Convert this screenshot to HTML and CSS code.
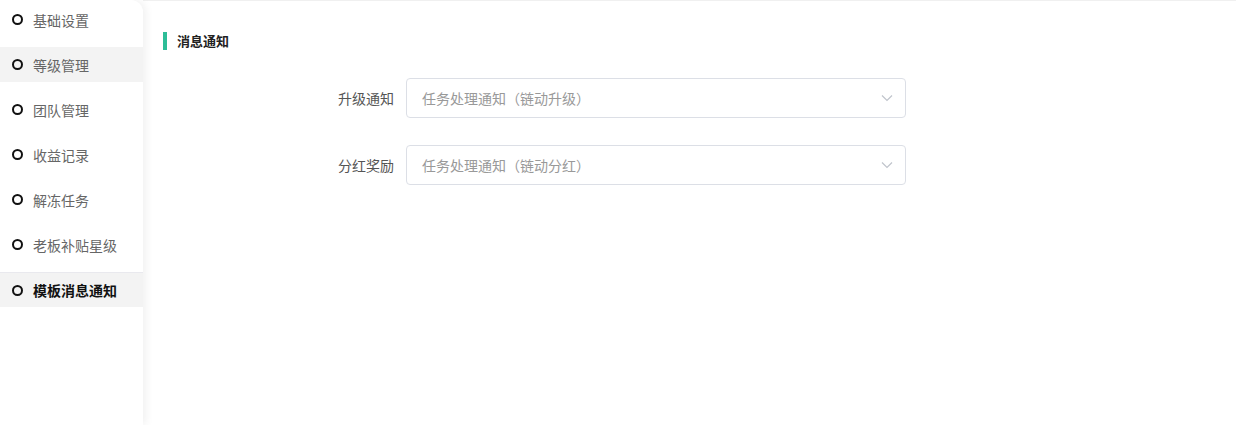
FILE: index.html
```html
<!DOCTYPE html>
<html lang="zh-CN">
  <head>
    <meta charset="utf-8" />
    <meta name="viewport" content="width=device-width, initial-scale=1" />
    <title>模板消息通知</title>
    <link rel="stylesheet" href="styles.css">
  </head>
  <body>
    <div class="layout">
      <!-- Left menu -->
      <ul class="side-menu">
        <li class="menu-item"><span class="dot"></span>基础设置</li>
        <li class="menu-item is-hover"><span class="dot"></span>等级管理</li>
        <li class="menu-item"><span class="dot"></span>团队管理</li>
        <li class="menu-item"><span class="dot"></span>收益记录</li>
        <li class="menu-item"><span class="dot"></span>解冻任务</li>
        <li class="menu-item"><span class="dot"></span>老板补贴星级</li>
        <li class="menu-item is-active"><span class="dot"></span>模板消息通知</li>
      </ul>

      <!-- Main content -->
      <div class="main">
        <h3 class="section-title">消息通知</h3>

        <form class="notice-form">
          <div class="form-row">
            <label class="form-label">升级通知</label>
            <div class="select">
              <span class="select-text">任务处理通知（链动升级）</span>
              <svg class="select-arrow" width="12" height="8" viewBox="0 0 12 8">
                <path d="M1 1.5 L6 6.5 L11 1.5" fill="none" stroke="#c0c4cc" stroke-width="1.2" />
              </svg>
            </div>
          </div>
          <div class="form-row">
            <label class="form-label">分红奖励</label>
            <div class="select">
              <span class="select-text">任务处理通知（链动分红）</span>
              <svg class="select-arrow" width="12" height="8" viewBox="0 0 12 8">
                <path d="M1 1.5 L6 6.5 L11 1.5" fill="none" stroke="#c0c4cc" stroke-width="1.2" />
              </svg>
            </div>
          </div>
        </form>
      </div>
    </div>
  </body>
</html>
```

FILE: styles.css
```css
/* Page reset */
html,
body {
  margin: 0;
  padding: 0;
  height: 100%;
  background: #fff;
  font-family: "Microsoft YaHei", "Noto Sans CJK SC", "Noto Sans", sans-serif;
}

.layout {
  display: flex;
  min-height: 425px;
}

/* Left menu */
.side-menu {
  list-style: none;
  margin: 0;
  padding: 2px 0 0;
  width: 143px;
  flex-shrink: 0;
  background: #fff;
  border-top-right-radius: 12px;
  box-shadow: 3px 0 8px rgba(0, 0, 0, 0.06);
  position: relative;
  z-index: 1;
}

.menu-item {
  display: flex;
  align-items: center;
  gap: 10px;
  height: 35px;
  margin-bottom: 10px;
  padding-left: 12px;
  font-size: 14px;
  color: #666;
  box-sizing: border-box;
}

.menu-item .dot {
  flex-shrink: 0;
  width: 11px;
  height: 11px;
  border: 2px solid #111;
  border-radius: 50%;
  box-sizing: border-box;
}

.menu-item.is-hover {
  background: #f3f3f3;
}

.menu-item.is-active {
  background: #f3f3f3;
  border-top: 1px solid #e9e9ee;
  margin-top: 1px;
  color: #111;
  font-weight: bold;
}

/* Main content */
.main {
  flex: 1;
  border-top: 1px solid #f0f0f0;
  padding: 31px 20px 0;
}

.section-title {
  margin: 0;
  height: 18px;
  line-height: 18px;
  border-left: 4px solid #2dbd97;
  padding-left: 10px;
  font-size: 13px;
  font-weight: bold;
  color: #222;
}

.notice-form {
  margin-top: 28px;
}

.form-row {
  display: flex;
  align-items: center;
  margin-bottom: 27px;
}

.form-label {
  width: 231px;
  padding-right: 12px;
  text-align: right;
  font-size: 14px;
  color: #555;
}

.select {
  width: 500px;
  height: 40px;
  box-sizing: border-box;
  border: 1px solid #dcdfe6;
  border-radius: 4px;
  padding: 0 12px 0 15px;
  display: flex;
  align-items: center;
  justify-content: space-between;
}

.select-text {
  font-size: 14px;
  color: #999;
}
```
